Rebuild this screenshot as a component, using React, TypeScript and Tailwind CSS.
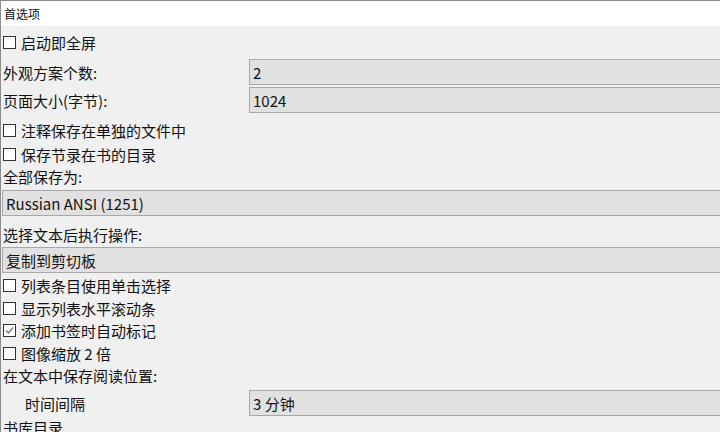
import React from "react";

const font = { fontFamily: '"Noto Sans CJK SC", "Noto Sans", sans-serif' };

function Box({ checked }: { checked?: boolean }) {
  return (
    <span className="w-[13px] h-[13px] border border-[#333] bg-white shrink-0 flex items-center justify-center mr-[5px]">
      {checked && (
        <svg width="11" height="11" viewBox="0 0 11 11">
          <path d="M2 5.5 L4.5 8 L9 2.5" stroke="#777" strokeWidth="1.3" fill="none" />
        </svg>
      )}
    </span>
  );
}

function Check({ label, checked, top }: { label: string; checked?: boolean; top: string }) {
  return (
    <div className={`flex items-center h-[22px] pl-[2px] ${top}`}>
      <Box checked={checked} />
      <span>{label}</span>
    </div>
  );
}

function Field({ value, cls }: { value: string; cls: string }) {
  return (
    <div className={`h-[26px] border border-[#a8a8a8] border-r-0 bg-[#e1e1e1] flex items-center pl-[3px] ${cls}`}>
      {value}
    </div>
  );
}

export default function App() {
  return (
    <div
      className="w-[720px] h-[432px] overflow-hidden bg-[#f0f0f0] border-l border-t border-[#8c8c8c] text-[15px] text-[#111] leading-none"
      style={font}
    >
      <div className="h-[25px] bg-white flex items-center pl-[3px] text-[12px]">首选项</div>
      <Check label="启动即全屏" top="mt-[5px]" />
      <div className="flex items-center h-[26px] mt-[6px]">
        <div className="w-[248px] pl-[2px] shrink-0">外观方案个数:</div>
        <Field value="2" cls="flex-1" />
      </div>
      <div className="flex items-center h-[26px] mt-[2px]">
        <div className="w-[248px] pl-[2px] shrink-0">页面大小(字节):</div>
        <Field value="1024" cls="flex-1" />
      </div>
      <Check label="注释保存在单独的文件中" top="mt-[6px]" />
      <Check label="保存节录在书的目录" top="mt-[2px]" />
      <div className="flex items-center h-[22px] pl-[2px]">全部保存为:</div>
      <div className="pl-[1px] mt-[3px]">
        <Field value="Russian ANSI (1251)" cls="" />
      </div>
      <div className="flex items-center h-[22px] pl-[2px] mt-[7px]">选择文本后执行操作:</div>
      <div className="pl-[1px] mt-[2px]">
        <Field value="复制到剪切板" cls="" />
      </div>
      <Check label="列表条目使用单击选择" top="mt-[1px]" />
      <Check label="显示列表水平滚动条" top="mt-[1px]" />
      <Check label="添加书签时自动标记" checked top="mt-0" />
      <Check label="图像缩放 2 倍" top="mt-[1px]" />
      <div className="flex items-center h-[22px] pl-[2px]">在文本中保存阅读位置:</div>
      <div className="flex items-center h-[26px] mt-[4px]">
        <div className="w-[248px] pl-[24px] shrink-0">时间间隔</div>
        <Field value="3 分钟" cls="flex-1" />
      </div>
      <div className="flex items-center h-[22px] pl-[2px]">书库目录</div>
    </div>
  );
}
